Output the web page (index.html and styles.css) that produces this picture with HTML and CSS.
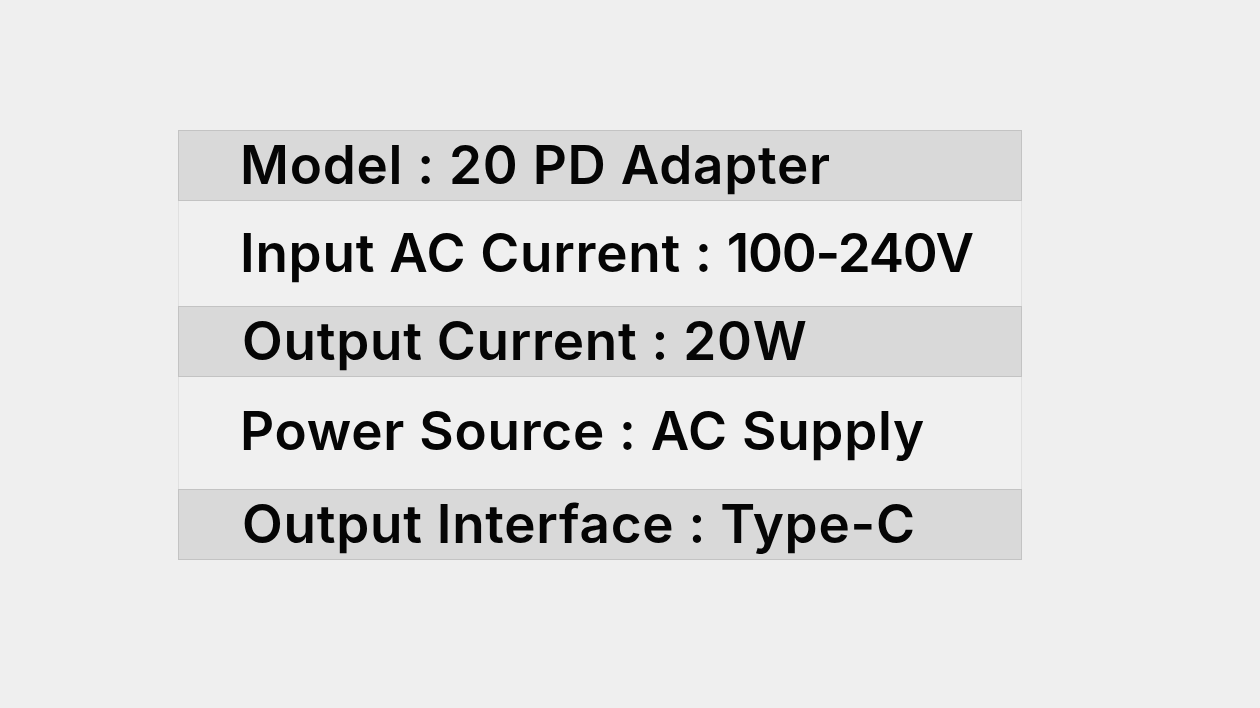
FILE: index.html
```html
<!DOCTYPE html>
<html>
<head>
<meta charset="utf-8">
<link rel="stylesheet" href="styles.css">
</head>
<body>
<div class="spec">
  <div class="row shade r1"><span class="txt">Model : 20 PD Adapter</span></div>
  <div class="row light r2"><span class="txt">Input AC Current : <span class="num">100-240V</span></span></div>
  <div class="row shade r3"><span class="txt">Output Current : 20W</span></div>
  <div class="row light r4"><span class="txt">Power Source : AC Supply</span></div>
  <div class="row shade r5"><span class="txt">Output Interface : Type-C</span></div>
</div>
</body>
</html>
```
FILE: styles.css
```css
html, body {
  margin: 0;
  padding: 0;
  background: #efefef;
}
body {
  width: 1260px;
  height: 708px;
  overflow: hidden;
  font-family: "Inter", "Liberation Sans", sans-serif;
}
.spec {
  margin: 130px 0 0 178px;
  width: 844px;
  display: flex;
  flex-direction: column;
}
.row {
  box-sizing: border-box;
  display: flex;
  align-items: flex-start;
  padding-left: 61px;
  color: #050505;
  font-size: 53px;
  font-weight: 600;
  line-height: 54px;
  letter-spacing: 0.75px;
}
.num {
  letter-spacing: -1.2px;
}
.shade {
  background: #d9d9d9;
  border: 1px solid #c3c3c3;
  height: 71px;
  padding-top: 7px;
}
.light {
  background: #f0f0f0;
  border-left: 1px solid #e0e0e0;
  border-right: 1px solid #e0e0e0;
}
.r2 { height: 105px; padding-top: 25px; }
.r4 { height: 112px; padding-top: 27px; }
.r3, .r5 { padding-left: 63px; }
```
